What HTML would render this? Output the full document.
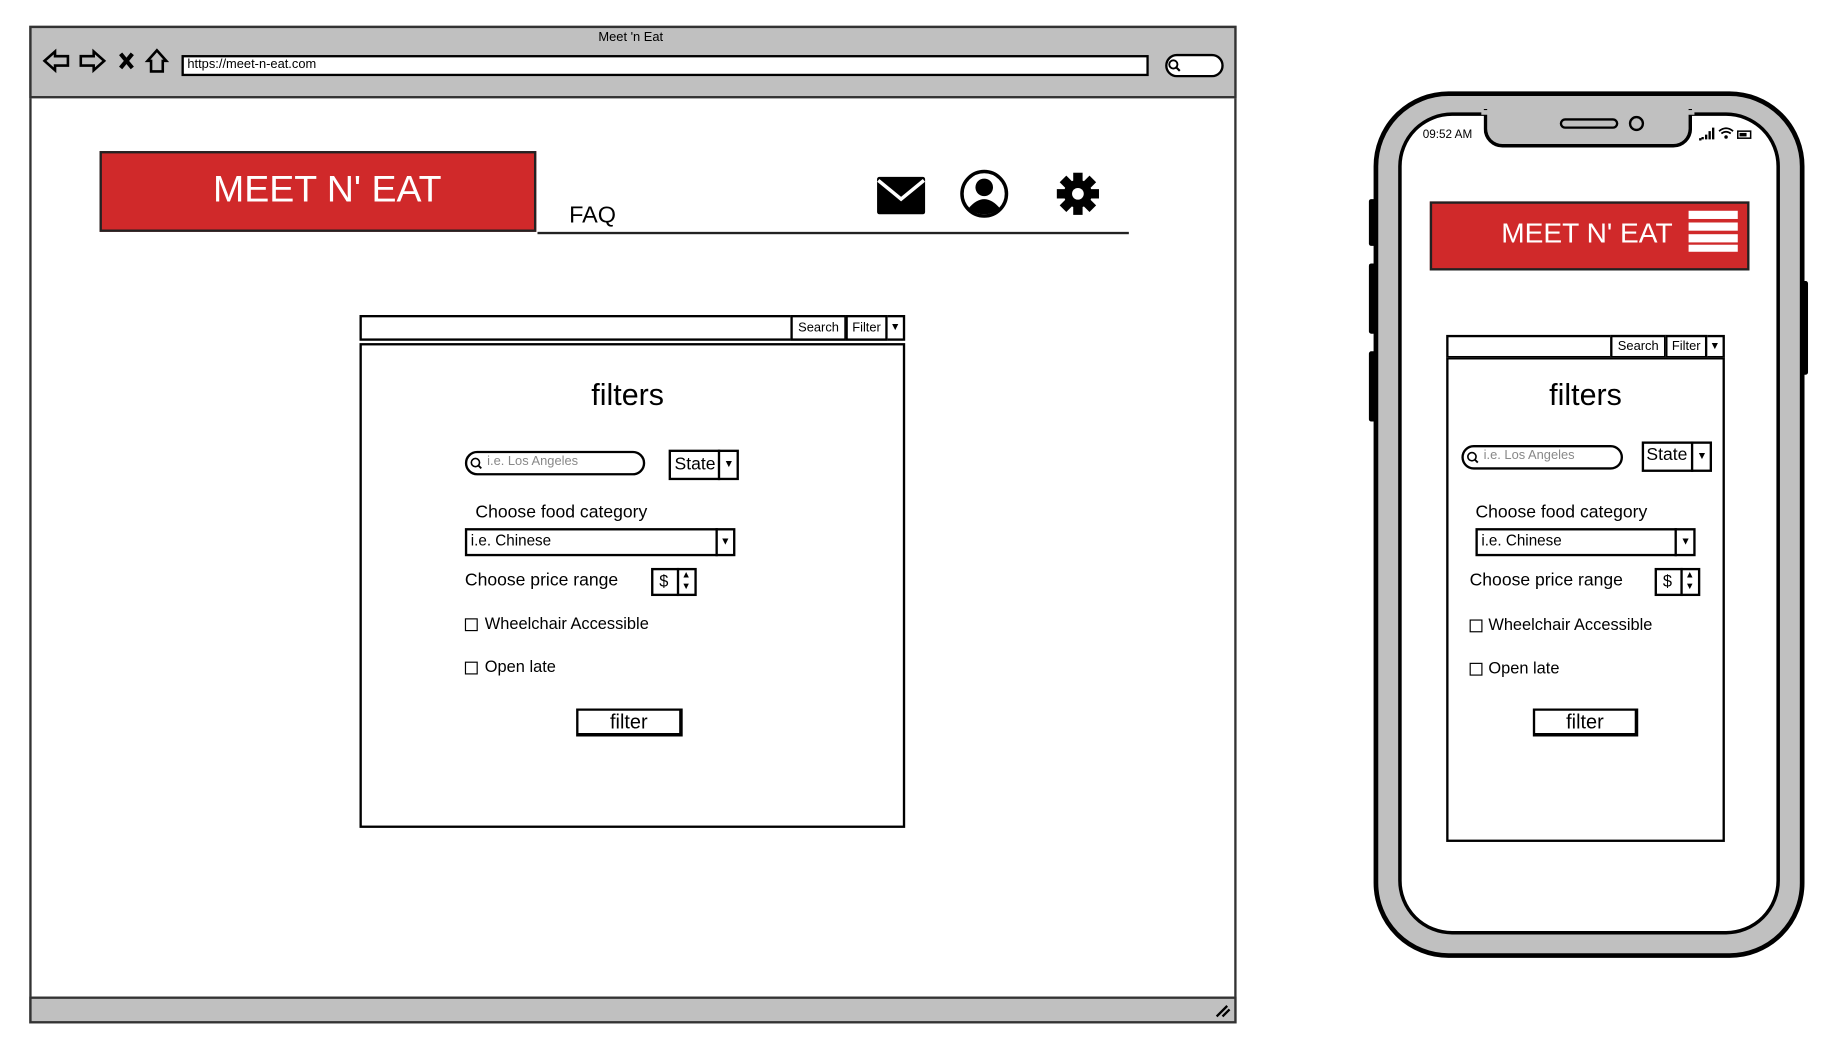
<!DOCTYPE html>
<html><head><meta charset="utf-8"><style>
html,body{margin:0;padding:0;background:#fff;width:1836px;height:1047px;overflow:hidden}
#s{position:absolute;left:0;top:0;width:1560px;height:890px;transform:scale(1.1710);transform-origin:0 0;font-family:"Liberation Sans",sans-serif;color:#000}
.a{position:absolute;box-sizing:border-box}
.b{border:2px solid #000;background:#fff}
.t{position:absolute;white-space:nowrap}
.red{background:#d0292a;border:2px solid #222;color:#fff}
</style></head><body><div id="s">
<!-- browser -->
<div class="a" style="left:25px;top:22px;width:1031px;height:852px;border:2px solid #333;background:#fff"></div>
<div class="a" style="left:25px;top:22px;width:1031px;height:62px;background:#c0c0c0;border:2px solid #333"></div>
<div class="t" style="left:511px;top:26px;font-size:11px">Meet 'n Eat</div>
<svg class="a" style="left:35px;top:40px" width="115" height="26" viewBox="0 0 115 26" fill="none" stroke="#000" stroke-width="2.2">
<path d="M3 12 L12 4 L12 8 L23 8 L23 16 L12 16 L12 20 Z"/>
<path d="M54 12 L45 4 L45 8 L34 8 L34 16 L45 16 L45 20 Z"/>
<path d="M68 6 L78 18 M78 6 L68 18" stroke-width="3.5"/>
<path d="M91 12 L99 3 L107 12 L104 12 L104 21 L94 21 L94 12 Z"/>
</svg>
<div class="a b" style="left:155px;top:47px;width:826px;height:18px"></div>
<div class="t" style="left:160px;top:49px;font-size:11px">https://meet-n-eat.com</div>
<div class="a b" style="left:995px;top:46px;width:50px;height:20px;border-radius:10px"></div>
<svg class="a" style="left:997px;top:50px" width="12" height="12"><circle cx="5" cy="5" r="3.5" fill="none" stroke="#000" stroke-width="1.6"/><path d="M7.5 7.5 L10.5 10.5" stroke="#000" stroke-width="1.8"/></svg>
<div class="a" style="left:25px;top:851px;width:1031px;height:23px;background:#c0c0c0;border:2px solid #333"></div>
<svg class="a" style="left:1036px;top:856px" width="16" height="14"><path d="M3 12 L12 3 M8 12 L14 6" stroke="#000" stroke-width="2"/></svg>

<div class="a red" style="left:85px;top:129px;width:373px;height:69px"></div>
<div class="t" style="left:93px;top:143px;width:373px;text-align:center;color:#fff;font-size:32px">MEET N' EAT</div>
<div class="t" style="left:486px;top:173px;font-size:20px">FAQ</div>
<div class="a" style="left:459px;top:198px;width:505px;height:2px;background:#222"></div>
<svg class="a" style="left:748px;top:150px" width="43" height="34" viewBox="0 0 43 34"><rect x="1" y="1" width="41" height="32" rx="2" fill="#000"/><path d="M2 4 L21.5 20 L41 4" fill="none" stroke="#fff" stroke-width="3"/></svg>
<svg class="a" style="left:819px;top:144px" width="43" height="43" viewBox="0 0 43 43"><circle cx="21.5" cy="21.5" r="19" fill="#fff" stroke="#000" stroke-width="3"/><circle cx="21.5" cy="16" r="7.5" fill="#000"/><path d="M8 34 Q21.5 18 35 34 Q21.5 44 8 34Z" fill="#000"/></svg>
<svg class="a" style="left:902px;top:147px" width="37" height="37" viewBox="-18.5 -18.5 37 37"><g fill="#000"><circle r="12"/><rect x="-4" y="-18" width="8" height="36"/><rect x="-4" y="-18" width="8" height="36" transform="rotate(45)"/><rect x="-4" y="-18" width="8" height="36" transform="rotate(90)"/><rect x="-4" y="-18" width="8" height="36" transform="rotate(135)"/></g><circle r="5" fill="#fff"/></svg>

<!-- desktop filter -->
<div class="a b" style="left:307px;top:269px;width:466px;height:22px"></div>
<div class="a b" style="left:675px;top:269px;width:48px;height:22px;font-size:11px;text-align:center;line-height:18px">Search</div>
<div class="a b" style="left:722px;top:269px;width:36px;height:22px;font-size:11px;text-align:center;line-height:18px">Filter</div>
<div class="t" style="left:760px;top:274px;font-size:9px">▼</div>
<div class="a b" style="left:307px;top:293px;width:466px;height:414px"></div>
<div class="t" style="left:303px;top:322px;width:466px;text-align:center;font-size:26px">filters</div>
<div class="a b" style="left:397px;top:385px;width:154px;height:21px;border-radius:11px"></div>
<svg class="a" style="left:401px;top:390px" width="12" height="12"><circle cx="5" cy="5" r="3.5" fill="none" stroke="#000" stroke-width="1.4"/><path d="M7.5 7.5 L10 10" stroke="#000" stroke-width="1.6"/></svg>
<div class="t" style="left:416px;top:388px;font-size:11px;color:#888">i.e. Los Angeles</div>
<div class="a b" style="left:571px;top:384px;width:60px;height:26px"></div>
<div class="a" style="left:613px;top:384px;width:2px;height:26px;background:#000"></div>
<div class="t" style="left:576px;top:388px;font-size:15px">State</div>
<div class="t" style="left:618px;top:391px;font-size:9px">▼</div>
<div class="t" style="left:406px;top:429px;font-size:15px">Choose food category</div>
<div class="a b" style="left:397px;top:451px;width:231px;height:24px"></div>
<div class="a" style="left:611px;top:451px;width:2px;height:24px;background:#000"></div>
<div class="t" style="left:402px;top:454px;font-size:13px">i.e. Chinese</div>
<div class="t" style="left:615px;top:457px;font-size:9px">▼</div>
<div class="t" style="left:397px;top:487px;font-size:15px">Choose price range</div>
<div class="a b" style="left:556px;top:485px;width:39px;height:24px"></div>
<div class="a" style="left:578px;top:485px;width:2px;height:24px;background:#000"></div>
<div class="t" style="left:563px;top:488px;font-size:14px">$</div>
<div class="t" style="left:582px;top:486px;font-size:8px;line-height:10px">▲<br>▼</div>
<div class="a" style="left:397px;top:528px;width:11px;height:11px;border:1.5px solid #000"></div>
<div class="t" style="left:414px;top:524px;font-size:14px">Wheelchair Accessible</div>
<div class="a" style="left:397px;top:565px;width:11px;height:11px;border:1.5px solid #000"></div>
<div class="t" style="left:414px;top:561px;font-size:14px">Open late</div>
<div class="a b" style="left:492px;top:605px;width:91px;height:24px;border-right-width:3px;border-bottom-width:3px;text-align:center;font-size:17px;line-height:20px">filter</div>

<!-- phone -->
<div class="a" style="left:1173px;top:78px;width:368px;height:740px;border:4px solid #000;border-radius:64px;background:#c0c0c0"></div>
<div class="a" style="left:1169px;top:170px;width:6px;height:40px;background:#000;border-radius:2px"></div>
<div class="a" style="left:1169px;top:225px;width:6px;height:60px;background:#000;border-radius:2px"></div>
<div class="a" style="left:1169px;top:300px;width:6px;height:60px;background:#000;border-radius:2px"></div>
<div class="a" style="left:1538px;top:240px;width:6px;height:80px;background:#000;border-radius:2px"></div>
<div class="a" style="left:1194px;top:96px;width:326px;height:702px;border:3px solid #000;border-radius:46px;background:#fff"></div>
<div class="a" style="left:1267px;top:93px;width:178px;height:33px;background:#c0c0c0;border:3px solid #000;border-top:none;border-radius:0 0 16px 16px"></div>
<div class="a" style="left:1265px;top:94px;width:182px;height:4px;background:#c0c0c0"></div>
<div class="a" style="left:1332px;top:101px;width:50px;height:9px;border:2.5px solid #000;border-radius:5px;background:#c0c0c0"></div>
<div class="a" style="left:1391px;top:99px;width:13px;height:13px;border:2.5px solid #000;border-radius:50%"></div>
<div class="t" style="left:1215px;top:110px;font-size:10px">09:52 AM</div>
<svg class="a" style="left:1450px;top:108px" width="48" height="12"><path d="M1 11h2M4 11v-2M7 11v-4M10 11v-7M13 11v-10" stroke="#000" stroke-width="2"/><path d="M18 4 Q24 -1 30 4 M20 6 Q24 3 28 6" fill="none" stroke="#000" stroke-width="1.5"/><circle cx="24" cy="9" r="1.5"/><rect x="34" y="4" width="11" height="6" fill="none" stroke="#000" stroke-width="1.3"/><rect x="35.5" y="5.5" width="6" height="3"/></svg>
<div class="a red" style="left:1221px;top:172px;width:273px;height:59px"></div>
<div class="t" style="left:1282px;top:186px;color:#fff;font-size:24px">MEET N' EAT</div>
<div class="a" style="left:1442px;top:180px;width:42px;height:7px;background:#fff"></div>
<div class="a" style="left:1442px;top:190px;width:42px;height:7px;background:#fff"></div>
<div class="a" style="left:1442px;top:200px;width:42px;height:7px;background:#fff"></div>
<div class="a" style="left:1442px;top:209px;width:42px;height:6px;background:#fff"></div>

<div class="a b" style="left:1235px;top:286px;width:238px;height:20px"></div>
<div class="a b" style="left:1375px;top:286px;width:48px;height:20px;font-size:11px;text-align:center;line-height:16px">Search</div>
<div class="a b" style="left:1422px;top:286px;width:36px;height:20px;font-size:11px;text-align:center;line-height:16px">Filter</div>
<div class="t" style="left:1460px;top:290px;font-size:9px">▼</div>
<div class="a b" style="left:1235px;top:305px;width:238px;height:414px"></div>
<div class="t" style="left:1235px;top:322px;width:238px;text-align:center;font-size:26px">filters</div>
<div class="a b" style="left:1248px;top:380px;width:138px;height:21px;border-radius:11px"></div>
<svg class="a" style="left:1252px;top:385px" width="12" height="12"><circle cx="5" cy="5" r="3.5" fill="none" stroke="#000" stroke-width="1.4"/><path d="M7.5 7.5 L10 10" stroke="#000" stroke-width="1.6"/></svg>
<div class="t" style="left:1267px;top:383px;font-size:11px;color:#888">i.e. Los Angeles</div>
<div class="a b" style="left:1402px;top:377px;width:60px;height:26px"></div>
<div class="a" style="left:1444px;top:377px;width:2px;height:26px;background:#000"></div>
<div class="t" style="left:1406px;top:380px;font-size:15px">State</div>
<div class="t" style="left:1449px;top:384px;font-size:9px">▼</div>
<div class="t" style="left:1260px;top:429px;font-size:15px">Choose food category</div>
<div class="a b" style="left:1260px;top:451px;width:188px;height:24px"></div>
<div class="a" style="left:1430px;top:451px;width:2px;height:24px;background:#000"></div>
<div class="t" style="left:1265px;top:454px;font-size:13px">i.e. Chinese</div>
<div class="t" style="left:1435px;top:457px;font-size:9px">▼</div>
<div class="t" style="left:1255px;top:487px;font-size:15px">Choose price range</div>
<div class="a b" style="left:1413px;top:485px;width:39px;height:24px"></div>
<div class="a" style="left:1435px;top:485px;width:2px;height:24px;background:#000"></div>
<div class="t" style="left:1420px;top:488px;font-size:14px">$</div>
<div class="t" style="left:1439px;top:486px;font-size:8px;line-height:10px">▲<br>▼</div>
<div class="a" style="left:1255px;top:529px;width:11px;height:11px;border:1.5px solid #000"></div>
<div class="t" style="left:1271px;top:525px;font-size:14px">Wheelchair Accessible</div>
<div class="a" style="left:1255px;top:566px;width:11px;height:11px;border:1.5px solid #000"></div>
<div class="t" style="left:1271px;top:562px;font-size:14px">Open late</div>
<div class="a b" style="left:1309px;top:605px;width:90px;height:24px;border-right-width:3px;border-bottom-width:3px;text-align:center;font-size:17px;line-height:20px">filter</div>
</div></body></html>
